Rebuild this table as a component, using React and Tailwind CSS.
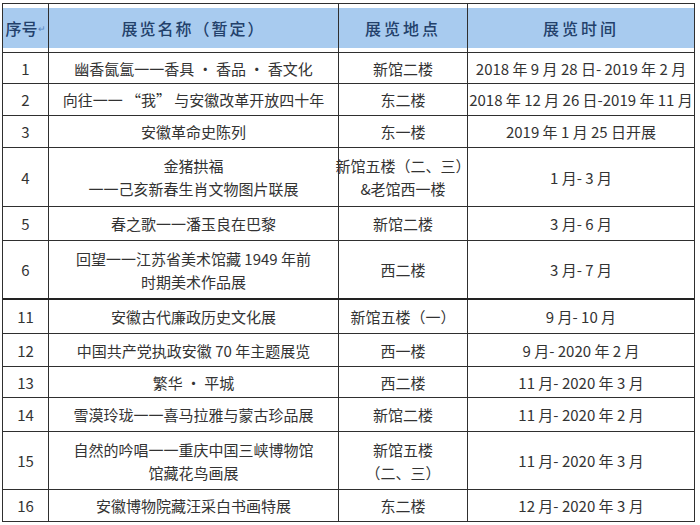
const rows = [
  { no: '1', name: ['幽香氤氲一一香具 · 香品 · 香文化'], place: ['新馆二楼'], time: '2018 年 9 月 28 日- 2019 年 2 月', h: 'h-[31px]' },
  { no: '2', name: ['向往一一 “我” 与安徽改革开放四十年'], place: ['东二楼'], time: '2018 年 12 月 26 日-2019 年 11 月', h: 'h-[32px]' },
  { no: '3', name: ['安徽革命史陈列'], place: ['东一楼'], time: '2019 年 1 月 25 日开展', h: 'h-[32px]' },
  { no: '4', name: ['金猪拱福', '一一己亥新春生肖文物图片联展'], place: ['新馆五楼（二、三）', '&老馆西一楼'], time: '1 月- 3 月', h: 'h-[59px]' },
  { no: '5', name: ['春之歌一一潘玉良在巴黎'], place: ['新馆二楼'], time: '3 月- 6 月', h: 'h-[34px]' },
  { no: '6', name: ['回望一一江苏省美术馆藏 1949 年前', '时期美术作品展'], place: ['西二楼'], time: '3 月- 7 月', h: 'h-[58px]' },
  { no: '11', name: ['安徽古代廉政历史文化展'], place: ['新馆五楼（一）'], time: '9 月- 10 月', h: 'h-[35px]', thick: true },
  { no: '12', name: ['中国共产党执政安徽 70 年主题展览'], place: ['西一楼'], time: '9 月- 2020 年 2 月', h: 'h-[33px]' },
  { no: '13', name: ['繁华 · 平城'], place: ['西二楼'], time: '11 月- 2020 年 3 月', h: 'h-[31px]' },
  { no: '14', name: ['雪漠玲珑一一喜马拉雅与蒙古珍品展'], place: ['新馆二楼'], time: '11 月- 2020 年 2 月', h: 'h-[34px]' },
  { no: '15', name: ['自然的吟唱一一重庆中国三峡博物馆', '馆藏花鸟画展'], place: ['新馆五楼', '（二、三）'], time: '11 月- 2020 年 3 月', h: 'h-[58px]' },
  { no: '16', name: ['安徽博物院藏汪采白书画特展'], place: ['东二楼'], time: '12 月- 2020 年 3 月', h: 'h-[32px]' },
];

const cell = 'flex flex-col items-center justify-center text-center whitespace-nowrap';

const Lines = ({ items }) => items.map((t, i) => <span key={i}>{t}</span>);

export default function App() {
  return (
    <div className="w-[700px] h-[525px] bg-white pt-[3px] pl-[2px] font-['Noto_Sans_CJK_SC',sans-serif] text-[15px] leading-[23px] text-[#333]">
      <div className="w-[693px] border border-[#2f2f2f]">
        {/* header */}
        <div className="flex h-[48px] text-[16px] font-medium text-[#23416b] tracking-[2px]">
          <div className="w-[45px] py-[4px]">
            <div className="h-full bg-[#a8cbef] flex items-center justify-center tracking-normal whitespace-nowrap">
              序号<span className="text-[9px] text-[#5a86c0]">↵</span>
            </div>
          </div>
          <div className="w-[290px] border-l border-[#2f2f2f] py-[4px]">
            <div className="h-full bg-[#a8cbef] flex items-center justify-center">展览名称（暂定）</div>
          </div>
          <div className="w-[129px] border-l border-[#2f2f2f] py-[4px]">
            <div className="h-full bg-[#a8cbef] flex items-center justify-center tracking-[3px]">展览地点</div>
          </div>
          <div className="w-[227px] border-l border-[#2f2f2f] py-[4px]">
            <div className="h-full bg-[#a8cbef] flex items-center justify-center tracking-[3px]">展览时间</div>
          </div>
        </div>

        {rows.map((r) => (
          <div key={r.no} className={`flex ${r.h} border-t ${r.thick ? 'border-t-2 border-[#222]' : 'border-[#2f2f2f]'}`}>
            <div className={`w-[45px] ${cell}`}>{r.no}</div>
            <div className={`w-[290px] border-l border-[#2f2f2f] ${cell}`}>
              <Lines items={r.name} />
            </div>
            <div className={`w-[129px] border-l border-[#2f2f2f] ${cell}`}>
              <Lines items={r.place} />
            </div>
            <div className={`w-[227px] border-l border-[#2f2f2f] ${cell}`}>{r.time}</div>
          </div>
        ))}
      </div>
    </div>
  );
}
